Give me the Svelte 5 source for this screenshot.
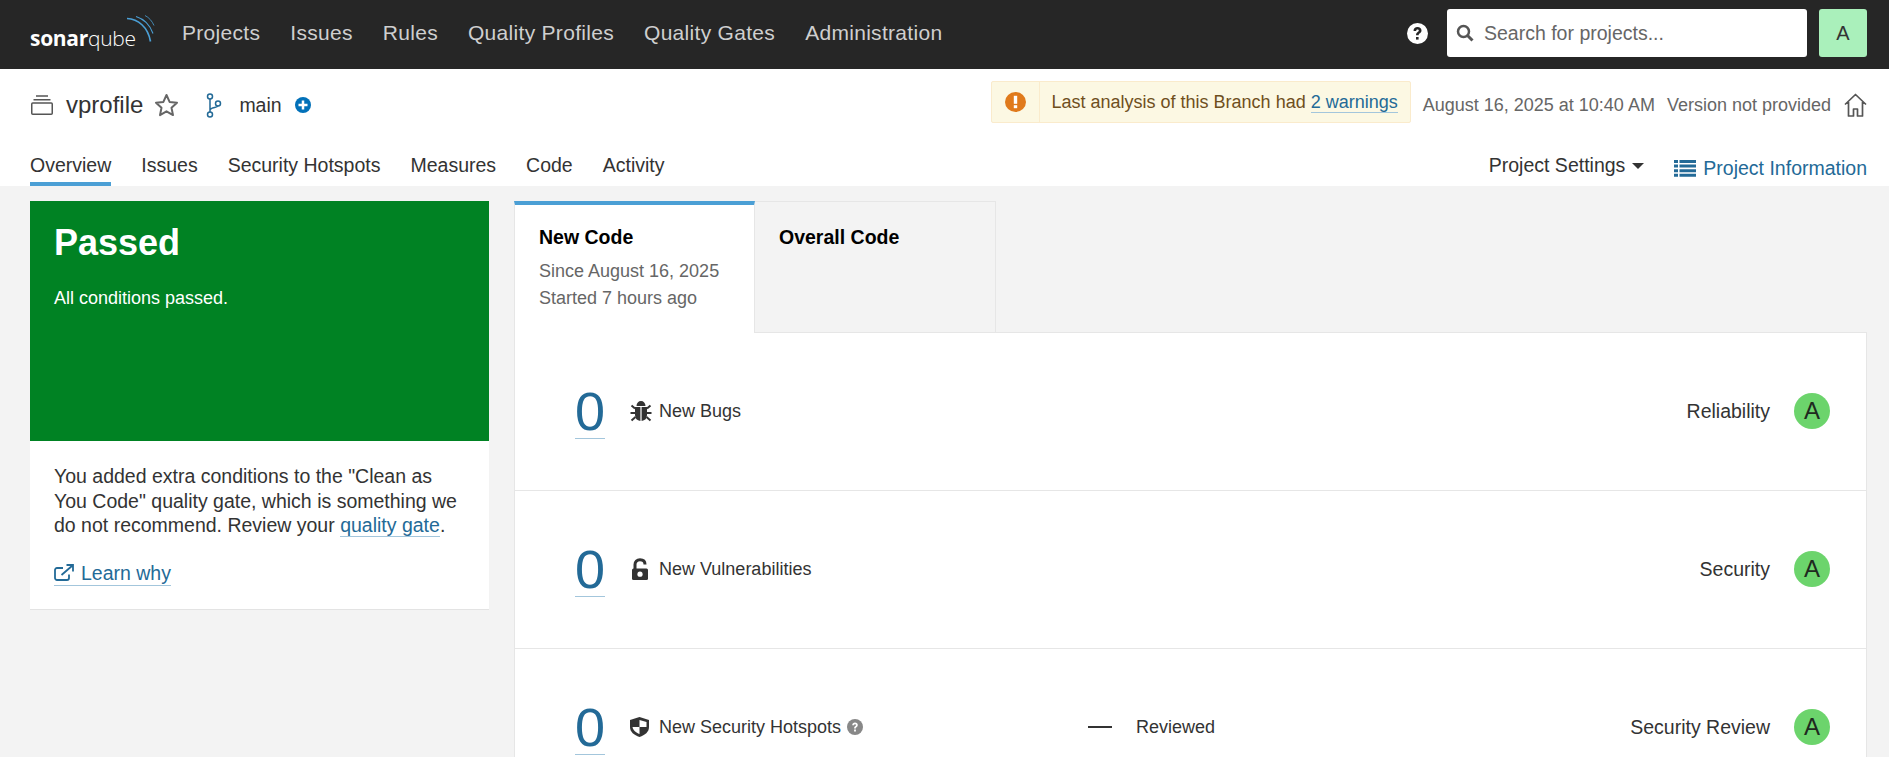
<script>
	const navItems = ['Projects', 'Issues', 'Rules', 'Quality Profiles', 'Quality Gates', 'Administration'];
	const tabs = ['Overview', 'Issues', 'Security Hotspots', 'Measures', 'Code', 'Activity'];
</script>

<div class="page">
	<nav class="navbar">
		<div class="logo">
			<span class="logo-text"><b>sonar</b>qube</span>
			<svg class="logo-arcs" width="36" height="30" viewBox="0 0 36 30" fill="none">
				<path d="M1 3.500C12 4 22 12 24.500 26.500" stroke="#4b9fd5" stroke-width="1.700" />
				<path d="M10 1.500C18 4 24 10 27 18.500" stroke="#4b9fd5" stroke-width="1.100" />
				<path d="M19 .5C23 2.500 26 6 28 10.500" stroke="#4b9fd5" stroke-width="0.800" />
			</svg>
		</div>
		<ul class="nav-links">
			{#each navItems as item}
				<li>{item}</li>
			{/each}
		</ul>
		<div class="nav-right">
			<svg class="help" width="21" height="21" viewBox="0 0 21 21">
				<circle cx="10.500" cy="10.500" r="10.500" fill="#fff" />
				<path d="M6.500 8c0-2.500 1.700-3.900 4-3.900 2.400 0 4 1.400 4 3.300 0 2.800-2.900 2.600-2.900 4.900H9c0-3.400 2.800-3.200 2.800-4.800 0-.7-.5-1.100-1.300-1.100-.9 0-1.300.6-1.400 1.600z" fill="#262626" />
				<rect x="9" y="14" width="2.600" height="2.600" fill="#262626" />
			</svg>
			<div class="search">
				<svg width="18" height="18" viewBox="0 0 18 18" fill="none">
					<circle cx="7.500" cy="7.500" r="5.500" stroke="#555" stroke-width="2.500" />
					<path d="M11.500 11.500L16.500 16.500" stroke="#555" stroke-width="3" />
				</svg>
				<span>Search for projects...</span>
			</div>
			<div class="avatar">A</div>
		</div>
	</nav>

	<header class="project-bar">
		<div class="project-top">
			<div class="crumbs">
				<svg class="project-icon" width="22" height="20" viewBox="0 0 22 20" fill="none" stroke="#555" stroke-width="1.500">
					<rect x=".75" y="8" width="20.500" height="11.250" rx="1" />
					<path d="M2.500 4.750H19.500M5 1H17" />
				</svg>
				<span class="project-name">vprofile</span>
				<svg class="star" width="25" height="24" viewBox="0 0 25 24" fill="none">
					<path d="M12.500 2l3.100 6.900 7.400.8-5.500 5 1.500 7.400-6.500-3.800-6.500 3.800 1.500-7.400-5.500-5 7.400-.8z" stroke="#666" stroke-width="2" stroke-linejoin="round" />
				</svg>
				<svg class="branch" width="16" height="25" viewBox="0 0 16 25" fill="none" stroke="#236a97" stroke-width="1.500">
					<circle cx="4" cy="3.500" r="2.500" />
					<circle cx="4" cy="21.500" r="2.500" />
					<circle cx="12" cy="10.500" r="2.500" />
					<path d="M4 6V19M4 17C5 14 11 15 12 13" />
				</svg>
				<span class="branch-name">main</span>
				<svg class="plus" width="16" height="16" viewBox="0 0 16 16">
					<circle cx="8" cy="8" r="8" fill="#0271b9" />
					<path d="M3.500 8h9M8 3.500v9" stroke="#fff" stroke-width="2.500" />
				</svg>
			</div>
			<div class="meta">
				<div class="warning">
					<div class="warning-icon">
						<svg width="21" height="20" viewBox="0 0 21 20">
							<ellipse cx="10.500" cy="10" rx="10.500" ry="10" fill="#e07a1c" />
							<rect x="8.800" y="3.800" width="3.400" height="8" fill="#fff" />
							<rect x="8.800" y="13.200" width="3.400" height="3" fill="#fff" />
						</svg>
					</div>
					<div class="warning-text">Last analysis of this Branch had <a href="#top">2 warnings</a></div>
				</div>
				<span class="date">August 16, 2025 at 10:40 AM</span>
				<span class="version">Version not provided</span>
				<svg class="home" width="23" height="24" viewBox="0 0 23 24" fill="none" stroke="#555" stroke-width="1.700">
					<path d="M1 11.500L11.500 1.500 22 11.500M4.500 9v14h5v-7h4v7h5V9" stroke-linejoin="round" />
				</svg>
			</div>
		</div>
		<div class="project-tabs">
			<ul class="tabs">
				{#each tabs as tab, i}
					<li class:active={i === 0}>{tab}</li>
				{/each}
			</ul>
			<div class="tab-actions">
				<span class="settings">Project Settings<i class="caret"></i></span>
				<span class="info">
					<svg width="22" height="18" viewBox="0 0 22 18" fill="#236a97">
						<path d="M0 1h4v3H0zM5.500 1H22v3H5.500zM0 5.600h4v3H0zM5.500 5.600H22v3H5.500zM0 10.200h4v3H0zM5.500 10.200H22v3H5.500zM0 14.800h4v3H0zM5.500 14.800H22v3H5.500z" />
					</svg>
					Project Information
				</span>
			</div>
		</div>
	</header>

	<main class="content">
		<aside class="gate">
			<div class="gate-status">
				<h2>Passed</h2>
				<p>All conditions passed.</p>
			</div>
			<div class="gate-body">
				<p>You added extra conditions to the "Clean as You Code" quality gate, which is something we do not recommend. Review your <a href="#top">quality gate</a>.</p>
				<a class="learn" href="#top">
					<svg width="20" height="17" viewBox="0 0 20 17" fill="none" stroke="#236a97" stroke-width="1.800">
						<path d="M15 10.500v3.500a2 2 0 0 1-2 2H3a2 2 0 0 1-2-2V6a2 2 0 0 1 2-2h6" />
						<path d="M7.500 11L18.500 1.500M12.500 1H19V7.500" />
					</svg>
					Learn why
				</a>
			</div>
		</aside>

		<section class="measures">
			<div class="code-tabs">
				<div class="code-tab selected">
					<h3>New Code</h3>
					<p>Since August 16, 2025</p>
					<p>Started 7 hours ago</p>
				</div>
				<div class="code-tab">
					<h3>Overall Code</h3>
				</div>
				<div class="code-tabs-rest"></div>
			</div>
			<div class="panel">
				<div class="row">
					<a class="value" href="#top">0</a>
					<svg class="metric-icon" width="24" height="24" viewBox="-1 0 24 24" fill="#333">
						<path d="M7.500 7C7.500 4 9.500 2 12 2s4.500 2 4.500 5zM6 8h5.400v14C8 21.500 6 19.500 6 16zM12.600 8H18v8c0 3.500-2 5.500-5.400 6z" />
						<path d="M6 9.500L2.500 6.500M6 14H1.500M6.500 18l-4 3.500M18 9.500L21.500 6.500M18 14h4.500M17.500 18l4 3.500" stroke="#333" stroke-width="2" fill="none" />
					</svg>
					<span class="metric-label">New Bugs</span>
					<span class="rating-label">Reliability</span>
					<span class="rating">A</span>
				</div>
				<div class="row">
					<a class="value" href="#top">0</a>
					<svg class="metric-icon" width="24" height="24" viewBox="-2 0 24 24">
						<path d="M5 12V7.500C5 4.500 7 2.800 10 2.800s5 1.700 5 4.700" fill="none" stroke="#333" stroke-width="3" />
						<rect x="2" y="11.500" width="16" height="11.500" rx="1.500" fill="#333" />
						<circle cx="10" cy="17.200" r="2.600" fill="#fff" />
					</svg>
					<span class="metric-label">New Vulnerabilities</span>
					<span class="rating-label">Security</span>
					<span class="rating">A</span>
				</div>
				<div class="row">
					<a class="value" href="#top">0</a>
					<svg class="metric-icon" width="24" height="24" viewBox="-2 0 24 24">
						<path d="M9.500 2L19 5V12c0 5-4 8-9.500 10C4 20 0 17 0 12V5z" fill="#333" />
						<path d="M9.500 5L16.500 7V12H9.500zM9.500 12V19C6 17.500 3 15.500 2.500 12z" fill="#fff" />
					</svg>
					<span class="metric-label">New Security Hotspots</span>
					<svg class="hint" width="16" height="16" viewBox="0 0 16 16">
						<circle cx="8" cy="8" r="8" fill="#888" />
						<path d="M5.200 6.200C5.300 4.600 6.400 3.600 8 3.600c1.700 0 2.800 1 2.800 2.300 0 2-2 1.900-2 3.600H7.100c0-2.400 1.900-2.300 1.900-3.500 0-.5-.4-.8-.9-.8-.6 0-1 .4-1 1zM7.100 10.500h1.800v1.900H7.100z" fill="#fff" />
					</svg>
					<span class="dash"></span>
					<span class="metric-label">Reviewed</span>
					<span class="rating-label">Security Review</span>
					<span class="rating">A</span>
				</div>
			</div>
		</section>
	</main>
</div>

<style>
	:global(body) {
		margin: 0;
		overflow: hidden;
		background: #f3f3f3;
	}

	.page {
		height: 757px;
		overflow: hidden;
		font-family: "Liberation Sans", Arial, sans-serif;
		color: #333;
	}

	a {
		color: #236a97;
		text-decoration: none;
		border-bottom: 1px solid #a3c6dc;
	}

	.navbar {
		display: flex;
		align-items: center;
		box-sizing: border-box;
		height: 69px;
		padding: 0 22px 3px 30px;
		background: #262626;
	}

	.logo {
		display: flex;
		width: 152px;
		height: 40px;
		position: relative;
	}

	.logo-text {
		position: absolute;
		left: 0;
		top: 11px;
		font-family: "Open Sans", sans-serif;
		font-size: 21px;
		font-weight: 300;
		letter-spacing: -0.3px;
		color: #fff;
	}

	.logo-text b {
		font-weight: 700;
	}

	.logo-arcs {
		position: absolute;
		left: 96px;
		top: 2px;
	}

	.nav-links {
		display: flex;
		gap: 30px;
		margin: 0;
		padding: 0;
		list-style: none;
		font-size: 21px;
		letter-spacing: 0.3px;
		color: #cfcfcf;
	}

	.nav-right {
		display: flex;
		align-items: center;
		margin-left: auto;
	}

	.help {
		margin-right: 19px;
	}

	.search {
		display: flex;
		align-items: center;
		gap: 10px;
		box-sizing: border-box;
		width: 360px;
		height: 48px;
		padding-left: 9px;
		border-radius: 3px;
		background: #fff;
		font-size: 19.500px;
		color: #666;
	}

	.avatar {
		width: 48px;
		height: 48px;
		margin-left: 12px;
		border-radius: 3px;
		background: #aaf0bb;
		text-align: center;
		font-size: 20px;
		line-height: 48px;
	}

	.project-bar {
		box-sizing: border-box;
		height: 117px;
		padding: 0 22px 0 30px;
		background: #fff;
	}

	.project-top {
		display: flex;
		justify-content: space-between;
		box-sizing: border-box;
		height: 59px;
		padding-top: 12px;
	}

	.crumbs {
		display: flex;
		align-items: center;
		height: 38px;
		margin-top: 5px;
	}

	.project-icon {
		margin-left: 1px;
	}

	.project-name {
		margin-left: 13px;
		font-size: 24px;
	}

	.star {
		margin-left: 11px;
	}

	.branch {
		margin-left: 27px;
	}

	.branch-name {
		margin-left: 17px;
		font-size: 19.500px;
	}

	.plus {
		margin-left: 13px;
	}

	.meta {
		display: flex;
		align-items: center;
		height: 42px;
		font-size: 18px;
		color: #666;
	}

	.warning {
		display: flex;
		align-items: center;
		box-sizing: border-box;
		height: 42px;
		margin-right: 12px;
		border: 1px solid #faebcc;
		border-radius: 2px;
		background: #fcf8e3;
		color: #6f4f1d;
	}

	.warning-icon {
		display: flex;
		align-items: center;
		justify-content: center;
		width: 21px;
		height: 40px;
		padding: 0 13px;
		border-right: 1px solid #faebcc;
	}

	.warning-text {
		padding: 0 12px;
	}

	.date {
		margin-top: 7px;
	}

	.home {
		margin-top: 5px;
	}

	.version {
		margin: 7px 13px 0 12px;
	}

	.project-tabs {
		display: flex;
		justify-content: space-between;
		align-items: flex-start;
	}

	.tabs {
		display: flex;
		gap: 30px;
		margin: 0;
		padding: 0;
		list-style: none;
		font-size: 19.500px;
	}

	.tabs li {
		box-sizing: border-box;
		height: 58px;
		padding-top: 25px;
		line-height: 24px;
	}

	.tabs li.active {
		border-bottom: 4px solid #4b9fd5;
	}

	.tab-actions {
		display: flex;
		align-items: flex-start;
		gap: 30px;
		padding-top: 25px;
		font-size: 19.500px;
		line-height: 24px;
	}

	.caret {
		display: inline-block;
		margin-left: 7px;
		vertical-align: 3px;
		border: 6px solid transparent;
		border-top-color: #333;
		border-bottom: 0;
	}

	.info {
		display: flex;
		align-items: center;
		gap: 7px;
		color: #236a97;
		margin-top: 3px;
	}

	.content {
		display: flex;
		gap: 25px;
		padding: 15px 22px 0 30px;
	}

	.gate {
		flex: none;
		width: 459px;
		height: 408px;
		background: #fff;
		box-shadow: 0 1px 0 #e3e3e3;
	}

	.gate-status {
		box-sizing: border-box;
		height: 240px;
		padding: 21px 24px;
		background: #008223;
		color: #fff;
	}

	.gate-status h2 {
		margin: 0;
		font-size: 36px;
		font-weight: 700;
		line-height: 42px;
	}

	.gate-status p {
		margin: 22px 0 0;
		font-size: 18px;
		line-height: 24px;
	}

	.gate-body {
		padding: 23px 24px;
		font-size: 19.500px;
		line-height: 24.500px;
	}

	.gate-body p {
		margin: 0;
	}

	.learn {
		display: inline-flex;
		align-items: center;
		gap: 7px;
		margin-top: 23px;
		line-height: 24px;
	}

	.measures {
		flex: 1;
		min-width: 0;
	}

	.code-tabs {
		display: flex;
		height: 132px;
	}

	.code-tab {
		box-sizing: border-box;
		width: 241px;
		padding: 23px 24px 0;
		border: 1px solid #e6e6e6;
		border-left: 0;
		font-size: 18px;
		color: #666;
	}

	.code-tab.selected {
		border: 0;
		border-left: 1px solid #e6e6e6;
		border-right: 1px solid #e6e6e6;
		border-top: 4px solid #4b9fd5;
		background: #fff;
		padding-top: 20px;
	}

	.code-tab h3 {
		margin: 0 0 9px;
		font-size: 19.500px;
		font-weight: 700;
		line-height: 24px;
		color: #000;
	}

	.code-tab p {
		margin: 0;
		line-height: 27px;
	}

	.code-tabs-rest {
		flex: 1;
		border-bottom: 1px solid #e6e6e6;
	}

	.panel {
		box-sizing: border-box;
		border: 1px solid #e6e6e6;
		border-top: 0;
		background: #fff;
	}

	.row {
		display: flex;
		align-items: center;
		box-sizing: border-box;
		height: 158px;
		padding: 0 36px 1px 60px;
		border-bottom: 1px solid #e6e6e6;
		font-size: 18px;
	}

	.value {
		width: 30px;
		height: 54px;
		font-size: 54px;
		line-height: 54px;
		text-align: center;
	}

	.metric-icon {
		margin-left: 23px;
		margin-right: 7px;
	}

	.hint {
		margin-left: 6px;
	}

	.dash {
		width: 24px;
		height: 2px;
		margin-left: 225px;
		margin-right: 24px;
		background: #333;
	}

	.rating-label {
		margin-left: auto;
		font-size: 19.500px;
	}

	.rating {
		width: 36px;
		height: 36px;
		margin-left: 24px;
		border-radius: 50%;
		background: #6cd46c;
		text-align: center;
		font-size: 24px;
		line-height: 36px;
		color: #1f2a1f;
	}
</style>
